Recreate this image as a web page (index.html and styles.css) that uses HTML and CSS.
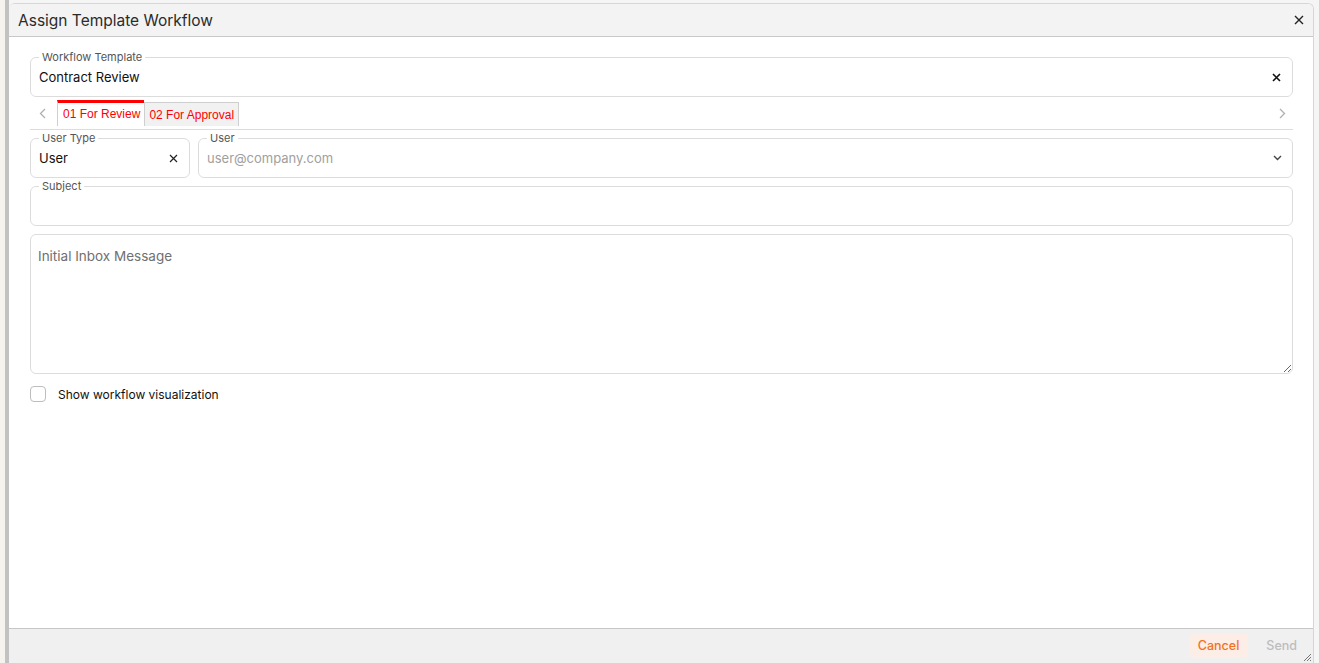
FILE: index.html
```html
<!DOCTYPE html>
<html lang="en">
<head>
    <meta charset="UTF-8">
    <meta name="viewport" content="width=device-width, initial-scale=1.0">
    <title>Assign Template Workflow</title>
    <link rel="stylesheet" href="styles.css">
</head>
<body>

    <div class="page-edge"></div>

    <!-- Dialog -->
    <div class="dialog">
        <div class="dialog-header">
            <h2>Assign Template Workflow</h2>
            <span class="icon-btn close-btn">
                <svg width="10" height="10" viewBox="0 0 10 10"><path d="M1 1L9 9M9 1L1 9" stroke="#222" stroke-width="1.4"/></svg>
            </span>
        </div>

        <div class="dialog-body">
            <div class="field">
                <span class="float-label">Workflow Template</span>
                <span class="value">Contract Review</span>
                <span class="icon-btn">
                    <svg width="9" height="9" viewBox="0 0 9 9"><path d="M1 1L8 8M8 1L1 8" stroke="#111" stroke-width="1.6"/></svg>
                </span>
            </div>

            <!-- Step tabs -->
            <div class="tabs-row">
                <span class="chevron">
                    <svg width="7" height="11" viewBox="0 0 7 11"><path d="M6 1L1.5 5.5L6 10" fill="none" stroke="#b0b0b0" stroke-width="1.3"/></svg>
                </span>
                <div class="tabs">
                    <span class="tab active">01 For Review</span>
                    <span class="tab">02 For Approval</span>
                </div>
                <span class="chevron">
                    <svg width="7" height="11" viewBox="0 0 7 11"><path d="M1 1L5.5 5.5L1 10" fill="none" stroke="#b0b0b0" stroke-width="1.3"/></svg>
                </span>
            </div>

            <div class="field-row">
                <div class="field user-type">
                    <span class="float-label">User Type</span>
                    <span class="value">User</span>
                    <span class="icon-btn">
                        <svg width="9" height="9" viewBox="0 0 9 9"><path d="M1 1L8 8M8 1L1 8" stroke="#222" stroke-width="1.2"/></svg>
                    </span>
                </div>
                <div class="field user">
                    <span class="float-label">User</span>
                    <span class="value placeholder">user@company.com</span>
                    <span class="icon-btn">
                        <svg width="9" height="6" viewBox="0 0 9 6"><path d="M1 1L4.5 4.5L8 1" fill="none" stroke="#444" stroke-width="1.4"/></svg>
                    </span>
                </div>
            </div>

            <div class="field">
                <span class="float-label">Subject</span>
            </div>

            <textarea class="message" placeholder="Initial Inbox Message"></textarea>

            <label class="check">
                <span class="box"></span>
                Show workflow visualization
            </label>
        </div>

        <div class="dialog-footer">
            <button class="btn btn-cancel">Cancel</button>
            <button class="btn btn-send">Send</button>
            <svg class="grip" width="9" height="9" viewBox="0 0 9 9"><path d="M8 1L1 8M8 4L4 8M8 7L7 8" stroke="#777" stroke-width="1"/></svg>
        </div>
    </div>

</body>
</html>
```

FILE: styles.css
```css
* {
    margin: 0;
    padding: 0;
    box-sizing: border-box;
    font-family: Inter, "Liberation Sans", Arial, sans-serif;
}
body {
    background: #f5f5f5;
    display: flex;
    height: 663px;
    overflow: hidden;
    padding-top: 3px;
}

/* Left edge of the page behind the dialog */
.page-edge {
    width: 9px;
    margin-top: -3px;
    background: #f6f2ee;
    border-right: 4px solid #c2c2c2;
}

/* Dialog */
.dialog {
    width: 1305px;
    height: 660px;
    background: #fff;
    border: 1px solid #d6d6d6;
    border-left: none;
    border-bottom: none;
    border-radius: 6px 6px 0 0;
    display: flex;
    flex-direction: column;
    overflow: hidden;
}
.dialog-header {
    background: #f3f3f3;
    height: 33px;
    border-bottom: 1px solid #c8c8c8;
    display: flex;
    align-items: center;
    justify-content: space-between;
    padding: 0 8px 0 9px;
}
.dialog-header h2 {
    font-size: 15.5px;
    font-weight: 400;
    color: #2b2b2b;
}
.icon-btn {
    display: flex;
    align-items: center;
    justify-content: center;
    width: 12px;
    height: 12px;
}

/* Body */
.dialog-body {
    flex: 1;
    padding: 20px 20px 0 21px;
}
.field {
    position: relative;
    height: 40px;
    border: 1px solid #dcdcdc;
    border-radius: 6px;
    display: flex;
    align-items: center;
    justify-content: space-between;
    padding: 0 10px 0 8px;
    margin-bottom: 8px;
}
.float-label {
    position: absolute;
    top: -7px;
    left: 8px;
    padding: 0 3px;
    background: #fff;
    font-size: 11px;
    line-height: 13px;
    color: #555;
}
.value {
    font-size: 13px;
    color: #111;
}
.value.placeholder {
    color: #a0a0a0;
}

/* Tabs */
.tabs-row {
    display: flex;
    align-items: flex-start;
    justify-content: space-between;
    height: 33px;
    margin-top: -8px;
    padding: 3px 3px 0 4px;
    border-bottom: 1px solid #dcdcdc;
    margin-bottom: 8px;
}
.chevron {
    width: 16px;
    height: 26px;
    display: flex;
    align-items: center;
    justify-content: center;
}
.tabs {
    flex: 1;
    display: flex;
    align-items: flex-end;
    height: 26px;
    padding-left: 7px;
}
.tab {
    font-family: "Liberation Sans", Arial, sans-serif;
    font-size: 12px;
    color: #f00;
    height: 24px;
    line-height: 24px;
    padding: 0 4px;
    background: #f1f1f1;
    border: 1px solid #cfcfcf;
    border-bottom: none;
}
.tab.active {
    height: 26px;
    background: #fff;
    border-top: 3px solid #f00;
    line-height: 22px;
    border-right: none;
    padding: 0 4px 0 5px;
}

.field-row {
    display: flex;
    gap: 8px;
}
.field.user-type {
    width: 160px;
    padding-right: 10px;
}
.field.user {
    flex: 1;
    padding-right: 9px;
}

textarea.message {
    display: block;
    width: 100%;
    height: 140px;
    border: 1px solid #dcdcdc;
    border-radius: 6px;
    padding: 11px 7px 10px;
    font-size: 13.5px;
    line-height: 20px;
    color: #111;
    resize: vertical;
    outline: none;
}
textarea.message::placeholder {
    color: #707070;
}

.check {
    display: flex;
    align-items: center;
    gap: 12px;
    margin-top: 12px;
    font-size: 12px;
    color: #111;
}
.check .box {
    width: 16px;
    height: 16px;
    border: 1px solid #bdbdbd;
    border-radius: 4px;
}

/* Footer */
.dialog-footer {
    position: relative;
    height: 35px;
    background: #f0f0f0;
    border-top: 1px solid #c6c6c6;
    display: flex;
    justify-content: flex-end;
    align-items: flex-start;
    gap: 9px;
    padding: 4px 7px 0 0;
}
.btn {
    height: 25px;
    padding: 0 9px;
    border: none;
    border-radius: 5px;
    font-size: 12.5px;
    font-weight: 500;
    background: transparent;
    cursor: pointer;
}
.btn-cancel {
    background: #fcede6;
    color: #f2721f;
}
.btn-send {
    color: #bdbdbd;
}
.grip {
    position: absolute;
    right: 1px;
    bottom: 1px;
}
```
